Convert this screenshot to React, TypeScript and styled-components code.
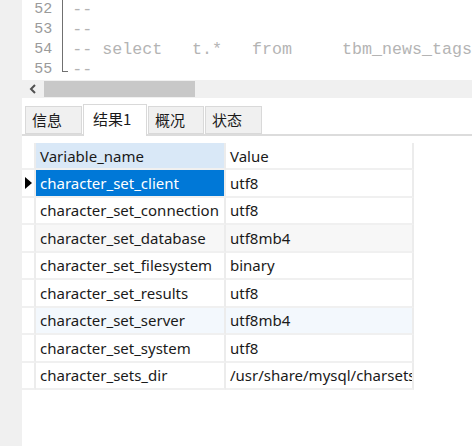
import styled, { createGlobalStyle } from "styled-components";

const GlobalStyle = createGlobalStyle`
  body {
    margin: 0;
    background: #ffffff;
    overflow: hidden;
  }
`;

const Page = styled.div`
  display: flex;
  width: 472px;
  height: 446px;
`;

const SideStrip = styled.div`
  width: 22px;
  flex-shrink: 0;
  background: #f0f0f0;
`;

const Main = styled.div`
  flex: 1;
  display: flex;
  flex-direction: column;
  min-width: 0;
  background: #ffffff;
`;

const Editor = styled.div`
  height: 80px;
  display: flex;
  overflow: hidden;
`;

const Gutter = styled.div`
  width: 32px;
  display: flex;
  flex-direction: column;
  align-items: flex-end;
  font-family: "Liberation Mono", monospace;
  font-size: 15px;
  color: #9a9a9a;
`;

const GutterLine = styled.div`
  height: 20px;
  line-height: 19px;
`;

const FoldColumn = styled.div`
  width: 21px;
  position: relative;
`;

const FoldBar = styled.div`
  position: absolute;
  left: 10px;
  top: 0;
  width: 5px;
  height: 71px;
  border-left: 1px solid #707070;
  border-bottom: 1px solid #707070;
`;

const Code = styled.div`
  flex: 1;
  font-family: "Liberation Mono", monospace;
  font-size: 16.67px;
  color: #b4b4b4;
  white-space: pre;
`;

const CodeLine = styled.div`
  height: 20px;
  line-height: 19px;
`;

const HScroll = styled.div`
  height: 18px;
  display: flex;
  align-items: stretch;
  background: #f0f0f0;
`;

const ScrollArrow = styled.div`
  width: 22px;
  display: flex;
  align-items: center;
  justify-content: center;
`;

const ScrollThumb = styled.div`
  width: 151px;
  margin: 1px 0;
  background: #c8c8c8;
`;

const TabBar = styled.div`
  margin-top: 6px;
  height: 30px;
  display: flex;
  align-items: flex-end;
  gap: 1px;
  padding-left: 3px;
  border-bottom: 2px solid #dcdcdc;
`;

const Tab = styled.div<{ $active?: boolean; $w: number }>`
  width: ${(p) => p.$w}px;
  box-sizing: border-box;
  height: ${(p) => (p.$active ? 32 : 28)}px;
  margin-bottom: ${(p) => (p.$active ? -2 : 0)}px;
  background: ${(p) => (p.$active ? "#ffffff" : "#f0f0f0")};
  border: 1px solid #d9d9d9;
  border-bottom: ${(p) => (p.$active ? "none" : "1px solid #d9d9d9")};
  padding-left: ${(p) => (p.$active ? 9 : 6)}px;
  padding-top: ${(p) => (p.$active ? 3 : 2)}px;
  font-family: "Noto Sans CJK SC", "Noto Sans", sans-serif;
  font-size: 15px;
  line-height: 22px;
  color: #1a1a1a;
`;

const Content = styled.div`
  flex: 1;
  padding-top: 7px;
`;

const Grid = styled.div`
  display: grid;
  grid-template-columns: 14px 190px 188px;
  font-family: "Noto Sans", sans-serif;
  font-size: 15px;
  color: #1a1a1a;
`;

const Cell = styled.div<{ $bg?: string; $header?: boolean; $selected?: boolean }>`
  height: ${(p) => (p.$header ? 27 : 27.5)}px;
  box-sizing: border-box;
  padding-left: 4px;
  display: flex;
  align-items: center;
  white-space: nowrap;
  overflow: hidden;
  background: ${(p) => (p.$selected ? "#0078d7" : p.$bg || "#ffffff")};
  color: ${(p) => (p.$selected ? "#ffffff" : "#1a1a1a")};
  border-bottom: 2px solid #f0f0f0;
  border-right: 2px solid #ececec;
`;

const Indicator = styled(Cell)`
  padding-left: 3px;
`;

const rows = [
  ["character_set_client", "utf8"],
  ["character_set_connection", "utf8"],
  ["character_set_database", "utf8mb4"],
  ["character_set_filesystem", "binary"],
  ["character_set_results", "utf8"],
  ["character_set_server", "utf8mb4"],
  ["character_set_system", "utf8"],
  ["character_sets_dir", "/usr/share/mysql/charsets/"],
];

const rowBg = (i: number) => (i === 2 ? "#f7f7f7" : i === 5 ? "#f3f8fd" : "#ffffff");

export default function App() {
  return (
    <>
      <GlobalStyle />
      <Page>
        <SideStrip />
        <Main>
          <Editor>
            <Gutter>
              {[52, 53, 54, 55].map((n) => (
                <GutterLine key={n}>{n}</GutterLine>
              ))}
            </Gutter>
            <FoldColumn>
              <FoldBar />
            </FoldColumn>
            <Code>
              <CodeLine>--</CodeLine>
              <CodeLine>--</CodeLine>
              <CodeLine>{"-- select   t.*   from     tbm_news_tags"}</CodeLine>
              <CodeLine>--</CodeLine>
            </Code>
          </Editor>
          <HScroll>
            <ScrollArrow>
              <svg width="10" height="10" viewBox="0 0 10 10">
                <polyline
                  points="7,1 3,5 7,9"
                  fill="none"
                  stroke="#505050"
                  strokeWidth="2"
                />
              </svg>
            </ScrollArrow>
            <ScrollThumb />
          </HScroll>
          <TabBar>
            <Tab $w={57}>信息</Tab>
            <Tab $w={64} $active>
              结果1
            </Tab>
            <Tab $w={56}>概况</Tab>
            <Tab $w={57}>状态</Tab>
          </TabBar>
          <Content>
            <Grid>
              <Indicator $header />
              <Cell $header $bg="#d9e8f7">
                Variable_name
              </Cell>
              <Cell $header>Value</Cell>
              {rows.map(([name, value], i) => (
                <>
                  <Indicator key={`i${i}`}>
                    {i === 0 && (
                      <svg width="7" height="12" viewBox="0 0 7 12">
                        <polygon points="0,0 7,6 0,12" fill="#000000" />
                      </svg>
                    )}
                  </Indicator>
                  <Cell key={`n${i}`} $selected={i === 0} $bg={rowBg(i)}>
                    {name}
                  </Cell>
                  <Cell key={`v${i}`} $bg={rowBg(i)}>
                    {value}
                  </Cell>
                </>
              ))}
            </Grid>
          </Content>
        </Main>
      </Page>
    </>
  );
}
